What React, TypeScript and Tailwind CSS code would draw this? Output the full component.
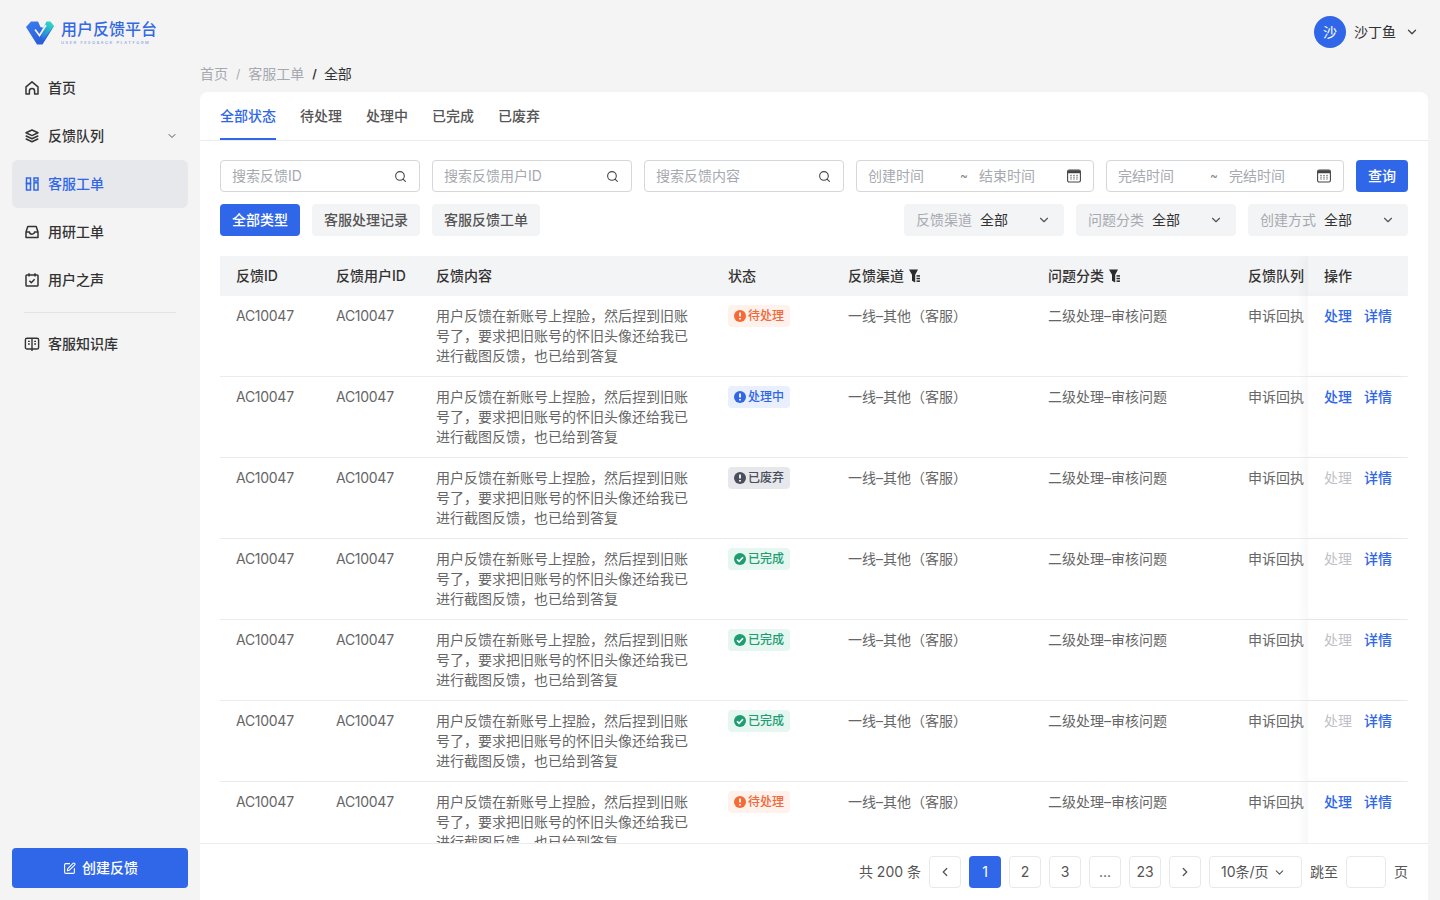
import React from 'react';
import { ChevronDown, ChevronLeft, ChevronRight, Search, SquarePen } from 'lucide-react';

const FEEDBACK_TEXT = '用户反馈在新账号上捏脸\uFF0C然后捏到旧账号了\uFF0C要求把旧账号的怀旧头像还给我已进行截图反馈\uFF0C也已给到答复';
const CHANNEL_TEXT = '一线–其他\uFF08客服\uFF09';

const Logo = () => (
    <svg width="28" height="24" viewBox="0 0 28 24" fill="none">
        <defs>
            <linearGradient id="lg1" x1="0" y1="0" x2="0.6" y2="1">
                <stop offset="0" stopColor="#3b7cf0" />
                <stop offset="1" stopColor="#2a5bd7" />
            </linearGradient>
            <linearGradient id="lg2" x1="0.2" y1="1" x2="0.8" y2="0">
                <stop offset="0" stopColor="#2a6fe0" />
                <stop offset="1" stopColor="#2fe0c0" />
            </linearGradient>
        </defs>
        <path d="M0 6 L5 .5 L12 .5 L14.5 6 L18 7 L28 5 L16.500 23.500 L11 23.500 Z" fill="url(#lg1)" />
        <path d="M14 13 L20.500 .5 L24.500 .5 L28 5 L17 19 Z" fill="url(#lg2)" />
        <path d="M9 8.500 L13.500 14.500 L20 4" fill="none" stroke="#f4f4f4" strokeWidth="1.700" />
    </svg>
);

const HomeIcon = () => (
    <svg width="16" height="16" viewBox="0 0 16 16" fill="none" stroke="#333" strokeWidth="1.5" strokeLinejoin="round">
        <path d="M2 6.800 L8 1.800 L14 6.800 V14 H10.600 V11 a2.600 2.600 0 0 0 -5.200 0 V14 H2 Z" />
    </svg>
);

const LayersIcon = () => (
    <svg width="16" height="16" viewBox="0 0 16 16" fill="none" stroke="#333" strokeWidth="1.5" strokeLinejoin="round" strokeLinecap="round">
        <path d="M8 2 L14 4.800 L8 7.600 L2 4.800 Z" />
        <path d="M2.200 8 L8 10.800 L13.800 8" />
        <path d="M2.200 11 L8 13.800 L13.800 11" />
    </svg>
);

const KanbanIcon = () => (
    <svg width="16" height="16" viewBox="0 0 16 16" fill="none" stroke="#2f67e8" strokeWidth="1.5">
        <rect x="2.500" y="2" width="4" height="5.500" />
        <rect x="2.500" y="7.500" width="4" height="6.500" />
        <rect x="10" y="2" width="4" height="3" />
        <rect x="10" y="6.800" width="4" height="7.200" />
    </svg>
);

const InboxIcon = () => (
    <svg width="16" height="16" viewBox="0 0 16 16" fill="none" stroke="#333" strokeWidth="1.5" strokeLinejoin="round">
        <path d="M3.800 2.500h8.400L14 8v5.500H2V8z" />
        <path d="M2 8h3.500a2.500 2.200 0 0 0 5 0H14" />
    </svg>
);

const CalendarCheckIcon = () => (
    <svg width="16" height="16" viewBox="0 0 16 16" fill="none" stroke="#333" strokeWidth="1.5" strokeLinejoin="round">
        <rect x="2" y="3" width="12" height="11" rx=".8" />
        <path d="M5 1.200v3.400M11 1.200v3.400M5.400 8.800l1.900 1.900 3.300-3.400" />
    </svg>
);

const BookIcon = () => (
    <svg width="16" height="16" viewBox="0 0 16 16" fill="none" stroke="#333" strokeWidth="1.4" strokeLinejoin="round">
        <path d="M3 2.200h10a1.600 1.600 0 0 1 1.600 1.600v7.600a1.600 1.600 0 0 1-1.600 1.600H3a1.600 1.600 0 0 1-1.600-1.600V3.800a1.600 1.600 0 0 1 1.600-1.600zM8 2.200V15" />
        <path d="M4 5.400h1.800M4 8h1.800M10.200 5.400H12M10.200 8H12" />
    </svg>
);

const CalendarIcon = () => (
    <svg width="14" height="14" viewBox="0 0 14 14" fill="none">
        <rect x="0.6" y="1" width="12.800" height="12" rx="1.500" stroke="#444" strokeWidth="1.100" />
        <path d="M1 2.500a1.200 1.200 0 0 1 1.200-1.200h9.600A1.200 1.200 0 0 1 13 2.500v1.700H1z" fill="#444" />
        <path d="M3.400 6.400h1.200M6.400 6.400h1.200M9.400 6.400h1.200M3.400 8.200h1.200M6.400 8.200h1.200M9.400 8.200h1.200M3.400 10h1.200M6.400 10h1.200M9.400 10h1.200" stroke="#444" strokeWidth="1" />
    </svg>
);

const FilterIcon = () => (
    <svg width="14" height="14" viewBox="0 0 14 14" fill="#2b2b2b">
        <path d="M1 .5h9L7.200 5.800V13.500L4 11.800V5.800z" />
        <rect x="8.500" y="6.200" width="3.500" height="1.500" />
        <rect x="8.500" y="8.800" width="3.500" height="1.500" />
        <rect x="8.500" y="11.400" width="3.500" height="1.500" />
    </svg>
);

const StatusDot = ({ color, done }: { color: string; done?: boolean }) => (
    <svg width="12" height="12" viewBox="0 0 12 12" className="shrink-0">
        <circle cx="6" cy="6" r="6" fill={color} />
        {done ? (
            <path d="M3 6.200l2.100 2.100L9 4.200" fill="none" stroke="#fff" strokeWidth="1.600" />
        ) : (
            <path d="M6 2.400v4.200M6 8v1.600" fill="none" stroke="#fff" strokeWidth="1.800" />
        )}
    </svg>
);

const tagStyles: Record<string, { box: string; color: string; done?: boolean }> = {
    待处理: { box: 'bg-[#fff1eb] text-[#f2693a]', color: '#f56a35' },
    处理中: { box: 'bg-[#e9effd] text-[#2f67e8]', color: '#2f67e8' },
    已废弃: { box: 'bg-[#e6e8ec] text-[#4a4f5c]', color: '#4a4f5c' },
    已完成: { box: 'bg-[#e6f6f0] text-[#1f9d72]', color: '#1f9d72', done: true },
};

const rows = [
    { status: '待处理', canHandle: true },
    { status: '处理中', canHandle: true },
    { status: '已废弃', canHandle: false },
    { status: '已完成', canHandle: false },
    { status: '已完成', canHandle: false },
    { status: '已完成', canHandle: false },
    { status: '待处理', canHandle: true },
];

const NavItem = ({ icon, label, active, arrow }: { icon: React.ReactNode; label: string; active?: boolean; arrow?: boolean }) => (
    <div className={`mx-3 flex h-12 items-center gap-2 rounded-md px-3 text-sm font-medium ${active ? 'bg-[#e6e8ec] text-[#2f67e8]' : 'text-[#333]'}`}>
        {icon}
        <span className="flex-1">{label}</span>
        {arrow && <ChevronDown size={12} strokeWidth={2} className="-mr-[2px] text-[#555]" />}
    </div>
);

const SearchBox = ({ placeholder }: { placeholder: string }) => (
    <div className="flex h-8 w-[200px] items-center rounded border border-[#d5d7db] bg-white pl-[11px] pr-[12px]">
        <input placeholder={placeholder} className="min-w-0 flex-1 bg-transparent text-sm outline-none placeholder:text-[#a6a9b0]" />
        <Search size={13} strokeWidth={2} className="text-[#444]" />
    </div>
);

const DateBox = ({ start, end }: { start: string; end: string }) => (
    <div className="flex h-8 w-[238px] items-center rounded border border-[#d5d7db] bg-white pl-[11px] pr-3 text-sm text-[#a6a9b0]">
        <span className="w-[92px]">{start}</span>
        <span className="w-[19px] text-xs text-[#888]">~</span>
        <span className="flex-1">{end}</span>
        <CalendarIcon />
    </div>
);

const FilterSelect = ({ label }: { label: string }) => (
    <div className="flex h-8 w-40 items-center rounded bg-[#f3f4f5] pl-3 pr-[13px] text-sm">
        <span className="mr-2 text-[#a6a9b0]">{label}</span>
        <span className="flex-1 text-[#333]">全部</span>
        <ChevronDown size={14} className="text-[#555]" />
    </div>
);

const PageBtn = ({ children, active }: { children: React.ReactNode; active?: boolean }) => (
    <div className={`flex h-8 w-8 items-center justify-center rounded text-sm ${active ? 'bg-[#2f67e8] text-white' : 'border border-[#e8e9eb] bg-white text-[#555]'}`}>
        {children}
    </div>
);

const gridCols = 'grid grid-cols-[100px_100px_292px_120px_200px_200px_76px_100px]';
const fixedCol = 'bg-white pl-4 shadow-[-6px_0_8px_rgba(0,0,0,0.03)]';

const App = () => {
    return (
        <div className="flex h-screen overflow-hidden bg-[#f4f4f4] font-['Inter','Noto_Sans_CJK_SC',sans-serif] text-sm">
            <aside className="flex w-[200px] shrink-0 flex-col">
                <div className="flex h-16 items-start pl-[26px] pt-[21px]">
                    <Logo />
                    <div className="-mt-[1px] ml-[7px]">
                        <div className="text-base font-medium leading-[18px] text-[#3469e3]">用户反馈平台</div>
                        <div className="mt-[3px] whitespace-nowrap text-[4px] leading-[4px] tracking-[1.55px] text-[#6b8fe0]">USER FEEDBACK PLATFORM</div>
                    </div>
                </div>
                <NavItem icon={<HomeIcon />} label="首页" />
                <NavItem icon={<LayersIcon />} label="反馈队列" arrow />
                <NavItem icon={<KanbanIcon />} label="客服工单" active />
                <NavItem icon={<InboxIcon />} label="用研工单" />
                <NavItem icon={<CalendarCheckIcon />} label="用户之声" />
                <div className="mx-6 mb-[7px] mt-2 h-px bg-[#e3e4e6]" />
                <NavItem icon={<BookIcon />} label="客服知识库" />
                <button className="mx-3 mb-3 mt-auto flex h-10 items-center justify-center gap-[6px] rounded bg-[#2f67e8] pl-px text-sm font-medium text-white">
                    <SquarePen size={13} />
                    创建反馈
                </button>
            </aside>

            <main className="flex min-w-0 flex-1 flex-col pr-3">
                <div className="flex h-16 shrink-0 items-center justify-end pr-[9px]">
                    <div className="flex h-8 w-8 items-center justify-center rounded-full bg-[#2f67e8] text-white">沙</div>
                    <span className="ml-2 text-[#333]">沙丁鱼</span>
                    <ChevronDown size={14} strokeWidth={2.2} className="ml-[9px] text-[#444]" />
                </div>
                <div className="mb-2 flex h-5 shrink-0 items-center text-[#a6a9b0]">
                    首页
                    <span className="mx-2 text-xs">/</span>
                    客服工单
                    <span className="ml-2 mr-[7px] text-xs font-semibold text-[#333]">/</span>
                    <span className="text-[#333]">全部</span>
                </div>

                <section className="flex min-h-0 flex-1 flex-col rounded-t-lg bg-white">
                    <div className="flex h-[49px] shrink-0 gap-6 border-b border-[#ececee] px-5 text-[#555]">
                        {['全部状态', '待处理', '处理中', '已完成', '已废弃'].map((t, i) => (
                            <div key={t} className={`flex h-12 items-center border-y-2 font-medium ${i === 0 ? 'border-t-transparent border-b-[#2f67e8] text-[#2f67e8]' : 'border-transparent'}`}>
                                {t}
                            </div>
                        ))}
                    </div>

                    <div className="flex gap-3 px-5 pt-[19px]">
                        <SearchBox placeholder="搜索反馈ID" />
                        <SearchBox placeholder="搜索反馈用户ID" />
                        <SearchBox placeholder="搜索反馈内容" />
                        <DateBox start="创建时间" end="结束时间" />
                        <DateBox start="完结时间" end="完结时间" />
                        <button className="h-8 w-[52px] rounded bg-[#2f67e8] text-sm font-medium text-white">查询</button>
                    </div>

                    <div className="flex gap-3 px-5 pt-3">
                        <div className="flex h-8 w-20 items-center justify-center rounded bg-[#2f67e8] font-medium text-white">全部类型</div>
                        <div className="flex h-8 w-[108px] items-center justify-center rounded bg-[#f3f4f5] font-medium text-[#555]">客服处理记录</div>
                        <div className="flex h-8 w-[108px] items-center justify-center rounded bg-[#f3f4f5] font-medium text-[#555]">客服反馈工单</div>
                        <div className="ml-auto flex gap-3">
                            <FilterSelect label="反馈渠道" />
                            <FilterSelect label="问题分类" />
                            <FilterSelect label="创建方式" />
                        </div>
                    </div>

                    <div className="mx-5 mt-5 min-h-0 flex-1 overflow-hidden">
                        <div className={`${gridCols} h-10 items-center bg-[#f3f4f5] font-medium text-[#333]`}>
                            <div className="pl-4">反馈ID</div>
                            <div className="pl-4">反馈用户ID</div>
                            <div className="pl-4">反馈内容</div>
                            <div className="pl-4">状态</div>
                            <div className="flex items-center gap-1 pl-4">反馈渠道 <FilterIcon /></div>
                            <div className="flex items-center gap-1 pl-4">问题分类 <FilterIcon /></div>
                            <div className="overflow-hidden whitespace-nowrap pl-4">反馈队列</div>
                            <div className={`${fixedCol} flex h-10 items-center !bg-[#f3f4f5]`}>操作</div>
                        </div>
                        {rows.map((row, i) => {
                            const tag = tagStyles[row.status];
                            return (
                                <div key={i} className={`${gridCols} h-[81px] border-b border-[#ececee] leading-5 text-[#666]`}>
                                    <div className="pl-4 pt-2.5 tracking-[-0.28px]">AC10047</div>
                                    <div className="pl-4 pt-2.5 tracking-[-0.28px]">AC10047</div>
                                    <div className="pl-4 pr-6 pt-2.5">{FEEDBACK_TEXT}</div>
                                    <div className="pl-4 pt-[9px]">
                                        <span className={`inline-flex h-[22px] items-center gap-0.5 rounded px-1.5 text-xs font-medium ${tag.box}`}>
                                            <StatusDot color={tag.color} done={tag.done} />
                                            {row.status}
                                        </span>
                                    </div>
                                    <div className="pl-4 pt-2.5">{CHANNEL_TEXT}</div>
                                    <div className="pl-4 pt-2.5">二级处理–审核问题</div>
                                    <div className="overflow-hidden whitespace-nowrap pl-4 pt-2.5">申诉回执</div>
                                    <div className={`${fixedCol} flex gap-3 pt-2.5 font-medium`}>
                                        <span className={row.canHandle ? 'text-[#2f67e8]' : 'font-normal text-[#bfc1c6]'}>处理</span>
                                        <span className="text-[#2f67e8]">详情</span>
                                    </div>
                                </div>
                            );
                        })}
                    </div>

                    <div className="relative flex h-[57px] shrink-0 items-center justify-end gap-2 border-t border-[#ececee] bg-white px-5 text-[#555]">
                        <span>共 200 条</span>
                        <PageBtn><ChevronLeft size={14} strokeWidth={2.2} /></PageBtn>
                        <PageBtn active>1</PageBtn>
                        <PageBtn>2</PageBtn>
                        <PageBtn>3</PageBtn>
                        <PageBtn>...</PageBtn>
                        <PageBtn>23</PageBtn>
                        <PageBtn><ChevronRight size={14} strokeWidth={2.2} /></PageBtn>
                        <div className="flex h-8 w-[93px] items-center rounded border border-[#e8e9eb] pl-[11px]">
                            <span>10条/页</span>
                            <ChevronDown size={13} className="ml-1" />
                        </div>
                        <span>跳至</span>
                        <div className="h-8 w-10 rounded border border-[#e8e9eb]" />
                        <span>页</span>
                    </div>
                </section>
            </main>
        </div>
    );
};

export default App;
